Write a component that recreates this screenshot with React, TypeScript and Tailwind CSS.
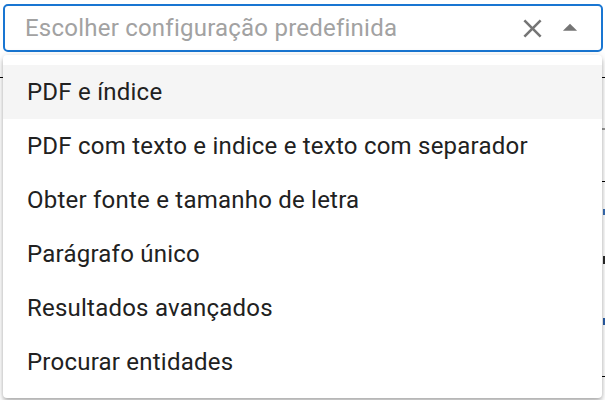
const options = [
  'PDF e índice',
  'PDF com texto e indice e texto com separador',
  'Obter fonte e tamanho de letra',
  'Parágrafo único',
  'Resultados avançados',
  'Procurar entidades',
];

const ClearIcon = () => (
  <svg viewBox="0 0 24 24" className="w-[31px] h-[31px] fill-[#757575]">
    <path d="M19 6.41 17.59 5 12 10.59 6.41 5 5 6.41 10.59 12 5 17.59 6.41 19 12 13.41 17.59 19 19 17.59 13.41 12z" />
  </svg>
);

const ArrowUpIcon = () => (
  <svg viewBox="0 0 24 24" className="w-[34px] h-[34px] fill-[#757575]">
    <path d="m7 14 5-5 5 5z" />
  </svg>
);

export default function App() {
  return (
    <div
      className="relative w-[605px] h-[400px] bg-white overflow-hidden"
      style={{ fontFamily: 'Roboto, "Liberation Sans", sans-serif' }}
    >
      {/* bits of the page underneath the popup */}
      <div className="absolute left-0 top-[77px] w-[4px] h-[1px] bg-black" />
      <div className="absolute right-0 top-[77px] w-[3px] h-[1px] bg-black" />
      <div className="absolute right-0 top-[128px] w-[3px] h-[2px] bg-[#999]" />
      <div className="absolute right-0 top-[181px] w-[3px] h-[1px] bg-black" />
      <div className="absolute right-0 top-[209px] w-[2px] h-[6px] bg-[#3b6fb5]" />
      <div className="absolute right-0 top-[256px] w-[2px] h-[8px] bg-[#2a2a2a]" />
      <div className="absolute right-0 top-[318px] w-[2px] h-[7px] bg-[#2b5fa8]" />
      <div className="absolute right-0 top-[376px] w-[3px] h-[1px] bg-black" />

      <div className="pt-[4px] pl-[3px] pr-[2px]">
        <div className="flex items-center h-[48px] border-2 border-[#1976d2] rounded-[5px] bg-white pl-[20px] pr-[14px]">
          <span className="flex-1 text-[24px] tracking-[0.00938em] text-[#a2a2a2] leading-none">
            Escolher configuração predefinida
          </span>
          <div className="flex items-center gap-[5px]">
            <ClearIcon />
            <ArrowUpIcon />
          </div>
        </div>
      </div>

      <ul className="absolute left-[3px] right-[3px] top-[55px] bottom-[2px] bg-white rounded-[4px] py-[10px] shadow-[0_2px_4px_-1px_rgba(0,0,0,0.2),0_4px_5px_0_rgba(0,0,0,0.14),0_1px_10px_0_rgba(0,0,0,0.12)]">
        {options.map((o, i) => (
          <li
            key={o}
            className={`flex items-center h-[54px] pl-[24px] text-[24px] tracking-[0.00938em] text-[#212121] ${
              i === 0 ? 'bg-[#f5f5f5]' : ''
            }`}
          >
            {o}
          </li>
        ))}
      </ul>
    </div>
  );
}
